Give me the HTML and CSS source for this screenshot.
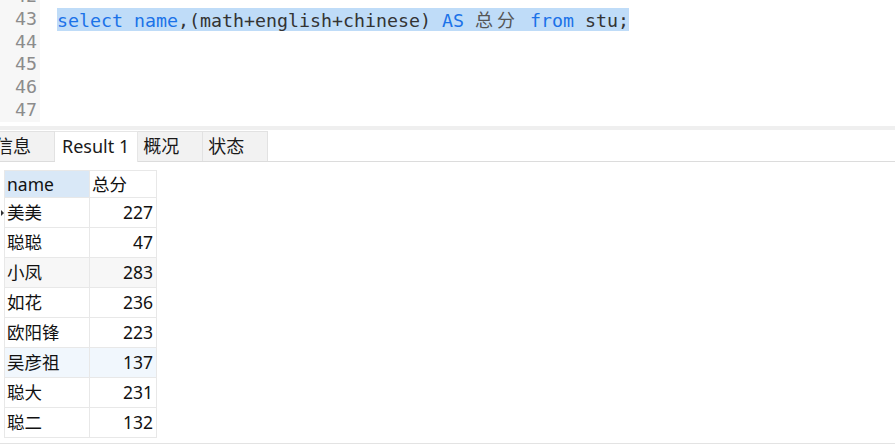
FILE: index.html
```html
<!DOCTYPE html>
<html lang="zh">
<head>
<meta charset="utf-8">
<link rel="stylesheet" href="styles.css">
</head>
<body>
<div class="app">
  <div class="editor">
    <div class="lines">
      <div class="line"><span class="ln">42</span><span class="code"></span></div>
      <div class="line"><span class="ln">43</span><span class="code"><span class="sel"><span class="kw">select</span> <span class="kw">name</span>,(math+english+chinese) <span class="kw">AS</span> <span class="cjk">总分</span> <span class="kw">from</span> stu;</span></span></div>
      <div class="line"><span class="ln">44</span><span class="code"></span></div>
      <div class="line"><span class="ln">45</span><span class="code"></span></div>
      <div class="line"><span class="ln">46</span><span class="code"></span></div>
      <div class="line"><span class="ln">47</span><span class="code"></span></div>
    </div>
  </div>
  <div class="splitter"></div>
  <div class="tabs">
    <div class="tab first">信息</div>
    <div class="tab active">Result 1</div>
    <div class="tab">概况</div>
    <div class="tab">状态</div>
  </div>
  <div class="results">
    <table class="grid">
      <thead>
        <tr><th class="h-name">name</th><th class="h-sum">总分</th></tr>
      </thead>
      <tbody>
        <tr class="current"><td>美美</td><td class="num">227</td></tr>
        <tr><td>聪聪</td><td class="num">47</td></tr>
        <tr class="alt"><td>小凤</td><td class="num">283</td></tr>
        <tr><td>如花</td><td class="num">236</td></tr>
        <tr><td>欧阳锋</td><td class="num">223</td></tr>
        <tr class="hover"><td>吴彦祖</td><td class="num">137</td></tr>
        <tr><td>聪大</td><td class="num">231</td></tr>
        <tr><td>聪二</td><td class="num">132</td></tr>
      </tbody>
    </table>
  </div>
</div>
</body>
</html>
```
FILE: styles.css
```css
html, body {
  margin: 0;
  padding: 0;
  background: #ffffff;
}
.app {
  width: 895px;
  height: 444px;
  overflow: hidden;
  display: flex;
  flex-direction: column;
}
.editor {
  height: 126px;
  flex: none;
  overflow: hidden;
  background: #ffffff;
  font-family: "DejaVu Sans Mono", "Liberation Mono", monospace;
  font-size: 18.27px;
}
.lines {
  margin-top: -15px;
}
.line {
  display: flex;
  height: 22.75px;
  line-height: 22.75px;
}
.ln {
  width: 37px;
  padding-right: 3px;
  text-align: right;
  background: #f7f7f7;
  color: #8c8c8c;
  flex: none;
}
.code {
  padding-left: 17px;
  color: #333333;
  white-space: pre;
}
.sel {
  background: #bfdcf8;
  display: inline-block;
  height: 22.75px;
}
.kw {
  color: #1b72e8;
}
.cjk {
  font-family: "Noto Sans CJK SC", sans-serif;
  color: #555555;
  letter-spacing: 4px;
  font-size: 18px;
}
.splitter {
  height: 4px;
  flex: none;
  background: #efefef;
}
.tabs {
  display: flex;
  flex: none;
  height: 30px;
  margin-top: 1px;
  border-bottom: 1px solid #dcdcdc;
  font-family: "Noto Sans", "Noto Sans CJK SC", sans-serif;
  font-size: 18px;
  color: #1a1a1a;
}
.tab {
  box-sizing: border-box;
  min-width: 65px;
  height: 30px;
  line-height: 29px;
  padding: 0 6px 0 5px;
  background: #f2f2f2;
  border: 1px solid #e2e2e2;
  border-left: none;
  border-bottom: none;
}
.tab.first {
  margin-left: -10px;
  padding-left: 5px;
  width: 65px;
}
.tab.active {
  background: #ffffff;
  padding: 0 8px 0 7px;
  height: 31px;
  border-color: #e6e6e6;
}
.results {
  flex: 1;
  padding: 8px 0 0 4px;
  border-bottom: 1px solid #e3e3e3;
  position: relative;
}
.grid {
  border-collapse: collapse;
  font-family: "Noto Sans", "Noto Sans CJK SC", sans-serif;
  font-size: 17.5px;
  color: #111111;
}
.grid th, .grid td {
  border: 1px solid #e8e8e8;
  padding: 0 3px 0 2px;
  font-weight: normal;
  text-align: left;
  white-space: nowrap;
}
.grid th {
  height: 26px;
  line-height: 26px;
}
.grid td {
  height: 29px;
  line-height: 29px;
}
.grid th:first-child, .grid td:first-child {
  width: 79px;
}
.grid th:last-child, .grid td:last-child {
  width: 61px;
}
.h-name {
  background: #d9e8f7;
}
.h-sum {
  background: #ffffff;
}
.grid td.num {
  text-align: right;
}
.grid tr.alt td {
  background: #f7f7f7;
}
.grid tr.hover td {
  background: #f1f7fd;
}
.grid tr.current td:first-child {
  position: relative;
}
.grid tr.current td:first-child::before {
  content: "";
  position: absolute;
  left: -4px;
  top: 12px;
  border-left: 3px solid #333333;
  border-top: 3px solid transparent;
  border-bottom: 3px solid transparent;
}
```
